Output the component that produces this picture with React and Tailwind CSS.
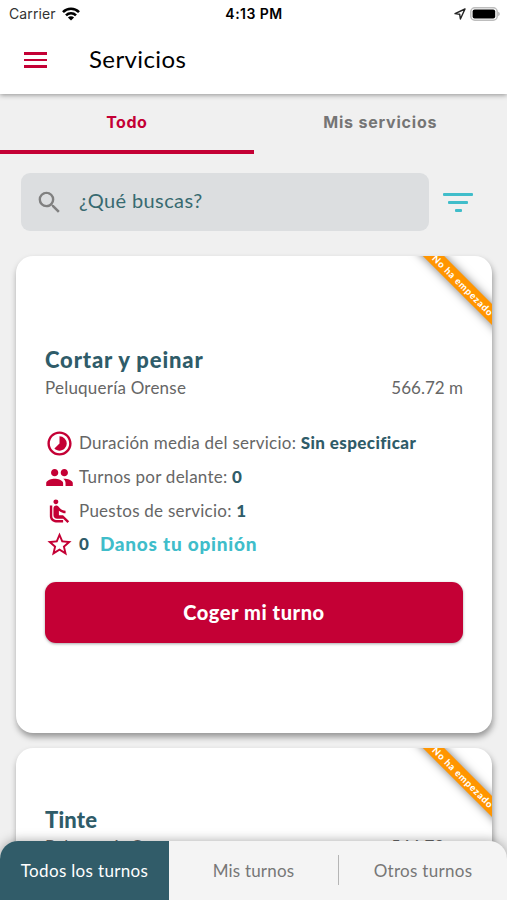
import React from 'react';
import {
  MdTimelapse,
  MdPeople,
  MdAirlineSeatReclineNormal,
  MdStarBorder,
  MdSearch,
} from 'react-icons/md';

function StatusBar() {
  return (
    <div className="grid h-[27px] grid-cols-3 items-center pr-2 pl-[9px] font-['Inter',sans-serif] text-black">
      <div className="flex items-center gap-1.5 text-[14px] leading-none tracking-[0.1px] text-[#333]">
        <span className="w-[47px] whitespace-nowrap">Carrier</span>
        <svg viewBox="0 0 18 14" className="h-[14px] w-[18px]" fill="none" stroke="#000" strokeWidth="2.6">
          <path d="M1 5.1a11.3 11.3 0 0 1 16 0" />
          <path d="M4 8.3a7.1 7.1 0 0 1 10 0" />
          <path d="M9 13.6 5.9 10.5a4.4 4.4 0 0 1 6.2 0z" fill="#000" stroke="none" />
        </svg>
      </div>
      <div className="text-center text-[14px] leading-none font-semibold tracking-[0.45px] whitespace-nowrap">4:13 PM</div>
      <div className="-mr-px flex items-center justify-end gap-1">
        <svg viewBox="0 0 12 12" className="h-3 w-3" fill="none" stroke="#222" strokeWidth="1.4" strokeLinejoin="round">
          <path d="M11 1 1 5.6l4.7.7.7 4.7z" />
        </svg>
        <svg viewBox="0 0 30 14" className="h-[14px] w-[30px]">
          <rect x="0.8" y="0.8" width="26.4" height="12.4" rx="4" fill="#fff" stroke="#bdbdbd" strokeWidth="1.5" />
          <rect x="2.6" y="2.6" width="22.6" height="8.8" rx="2" fill="#000" />
          <path d="M28.2 4.8q1.6.6 1.6 2.2t-1.6 2.2z" fill="#b5b5b5" />
        </svg>
      </div>
    </div>
  );
}

function Ribbon() {
  return (
    <div className="absolute top-[21.5px] -right-[30.5px] flex h-[15px] w-[120px] rotate-45 items-center justify-center bg-[#ff9500] font-['Lato',sans-serif] text-[9.5px] leading-none font-black tracking-[0.75px] whitespace-nowrap text-white shadow-[0_0_10px_rgba(0,0,0,0.5)]">
      No ha empezado
    </div>
  );
}

function Detail({ icon: Icon, label, value }) {
  return (
    <div className="flex h-[34px] items-center">
      <Icon className="mr-[5px] h-[29px] w-[29px] shrink-0 text-[#c40035]" />
      <span className="text-[17px] tracking-[0.25px] text-[#666]">
        {label} <b className="font-black tracking-[0.4px] text-[#2f5c69]">{value}</b>
      </span>
    </div>
  );
}

function Card({ title, place, distance, compact }) {
  return (
    <section className="relative mr-[15px] ml-[15.5px] h-[477px] shrink-0 rounded-[17px] bg-white shadow-[1px_4px_6px_rgba(0,0,0,0.38)]">
      <div className="absolute inset-0 overflow-hidden rounded-[17px]">
        <Ribbon />
      </div>
      <div className={compact ? 'px-[29.5px] pt-[56px]' : 'pr-[29px] pl-[29.5px] pt-[88px]'}>
        <h2
          className={
            compact
              ? 'text-[22px] leading-[32px] font-black tracking-[0.2px] text-[#2f5c69]'
              : 'text-[22px] leading-[32px] font-black tracking-[0.85px] text-[#2f5c69]'
          }
        >
          {title}
        </h2>
        <div
          className={
            compact
              ? '-mt-px flex justify-between text-[17px] leading-[23px] text-[#666]'
              : 'flex justify-between text-[17px] leading-[23px] text-[#666]'
          }
        >
          <span className="tracking-[0.22px]">{place}</span>
          <span>{distance}</span>
        </div>
        {!compact && (
          <>
            <div className="mt-[27px]">
              <Detail icon={MdTimelapse} label="Duración media del servicio:" value="Sin especificar" />
              <Detail icon={MdPeople} label="Turnos por delante:" value="0" />
              <Detail icon={MdAirlineSeatReclineNormal} label="Puestos de servicio:" value="1" />
              <div className="flex h-[32px] items-center">
                <MdStarBorder className="mr-[5px] h-[29px] w-[29px] text-[#c40035]" />
                <b className="mr-[11px] text-[17px] font-black text-[#2f5c69]">0</b>
                <a className="text-[19px] font-black tracking-[0.75px] text-[#40bdca]">Danos tu opinión</a>
              </div>
            </div>
            <button className="mt-[22px] h-[61px] w-full rounded-[11px] bg-[#c40035] pb-[2px] text-[20px] font-black tracking-[0.55px] text-white shadow-[0_1px_3px_rgba(0,0,0,0.35)]">
              Coger mi turno
            </button>
          </>
        )}
      </div>
    </section>
  );
}

export default function App() {
  return (
    <div className="relative flex h-[900px] w-[507px] flex-col overflow-hidden bg-[#f0f0f0] font-['Lato',sans-serif]">
      <header className="relative z-10 h-[94px] shrink-0 bg-white shadow-[0_1px_5px_rgba(0,0,0,0.4)]">
        <StatusBar />
        <div className="flex h-[64px] items-center pl-6">
          <div className="flex w-[65px] flex-col gap-[4px] pt-[2px]">
            <i className="h-[2.4px] w-[22.5px] bg-[#c40035]" />
            <i className="h-[2.4px] w-[22.5px] bg-[#c40035]" />
            <i className="h-[2.4px] w-[22.5px] bg-[#c40035]" />
          </div>
          <h1 className="text-[24px] tracking-[0.4px] text-black">Servicios</h1>
        </div>
      </header>
      <nav className="grid h-[60px] shrink-0 grid-cols-2 font-['Inter',sans-serif] text-[16px] font-bold">
        <div className="flex items-center justify-center border-b-4 border-[#c40035] pb-px tracking-[0.5px] text-[#c40035]">Todo</div>
        <div className="flex items-center justify-center border-b-4 border-transparent pb-px tracking-[0.8px] text-[#757575]">Mis servicios</div>
      </nav>
      <div className="mt-[19px] mb-[25px] flex h-[58px] shrink-0 items-center px-[21px]">
        <div className="flex h-full w-[408px] items-center rounded-[9px] bg-[#dcdee0] pl-[14px]">
          <MdSearch className="h-[29px] w-[29px] text-[#808080]" />
          <span className="ml-[15px] pb-[4px] text-[20px] tracking-[0.4px] text-[#386a70]">¿Qué buscas?</span>
        </div>
        <div className="ml-[14px] flex flex-col items-center gap-[5px]">
          <i className="h-[3px] w-[30px] rounded-[1px] bg-[#40bdca]" />
          <i className="h-[3px] w-[20px] rounded-[1px] bg-[#40bdca]" />
          <i className="h-[3px] w-[7px] rounded-[1px] bg-[#40bdca]" />
        </div>
      </div>
      <main className="flex flex-col gap-[15px]">
        <Card title="Cortar y peinar" place="Peluquería Orense" distance="566.72 m" />
        <Card title="Tinte" place="Peluquería Orense" distance="566.72 m" compact />
      </main>
      <footer className="absolute inset-x-0 bottom-0 z-10 flex h-[59px] overflow-hidden rounded-t-[18px] bg-[#f4f4f4] text-[17px] text-[#777] shadow-[0_0_12px_rgba(0,0,0,0.35)]">
        <div className="flex w-[169px] items-center justify-center bg-[#315c69] tracking-[0.33px] text-white">Todos los turnos</div>
        <div className="flex w-[169px] items-center justify-center tracking-[0.2px]">Mis turnos</div>
        <i className="mt-[14px] h-[30px] w-px bg-[#b5b5b5]" />
        <div className="flex flex-1 items-center justify-center tracking-[0.3px]">Otros turnos</div>
      </footer>
    </div>
  );
}
